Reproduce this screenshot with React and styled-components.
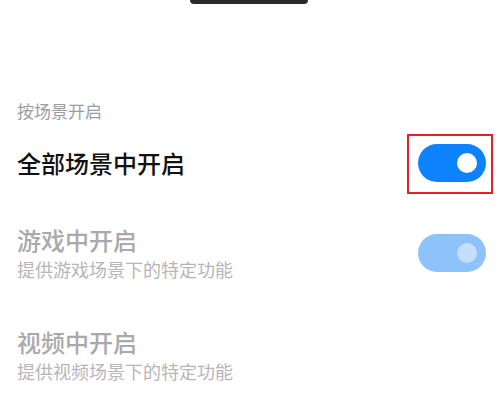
import React from "react";
import styled, { createGlobalStyle } from "styled-components";

const Global = createGlobalStyle`
  html, body { margin: 0; padding: 0; background: #ffffff; }
  body { font-family: "Noto Sans CJK SC", "Noto Sans", sans-serif; }
`;

const Page = styled.div`
  width: 500px;
  height: 409px;
  overflow: hidden;
  background: #ffffff;
  display: flex;
  flex-direction: column;
`;

const Handle = styled.div`
  align-self: center;
  width: 118px;
  height: 4px;
  background: #2a2a2a;
  border-radius: 0 0 5px 5px;
  margin-left: -2px;
`;

const SectionHeader = styled.div`
  margin-top: 95px;
  padding-left: 17px;
  font-size: 17px;
  line-height: 24px;
  color: #9c9ca4;
`;

const Row = styled.div`
  display: flex;
  align-items: center;
  justify-content: space-between;
  padding: ${(p) => p.$pad || "23px 14px 23px 17px"};
`;

const TextBlock = styled.div`
  display: flex;
  flex-direction: column;
`;

const Title = styled.div`
  font-size: 24px;
  line-height: 32px;
  font-weight: 500;
  color: ${(p) => (p.$disabled ? "#a9a9ab" : "#111111")};
`;

const Subtitle = styled.div`
  font-size: 18px;
  line-height: 26px;
  color: #b6b6b8;
`;

const ToggleWrap = styled.div`
  position: relative;
`;

const Highlight = styled.div`
  position: absolute;
  top: -10px;
  bottom: -12px;
  left: -11px;
  right: -7px;
  border: 2px solid #e5202b;
  pointer-events: none;
`;

const Toggle = styled.div`
  width: 68px;
  height: 38px;
  border-radius: 19px;
  background: ${(p) => (p.$disabled ? "#8dc2fb" : "#0c83fd")};
  display: flex;
  align-items: center;
  justify-content: flex-end;
  padding-right: 9px;
  box-sizing: border-box;
`;

const Knob = styled.div`
  width: 20px;
  height: 20px;
  border-radius: 50%;
  background: ${(p) => (p.$disabled ? "#c3dffd" : "#ffffff")};
`;

export default function App() {
  return (
    <>
      <Global />
      <Page>
        <Handle />
        <SectionHeader>按场景开启</SectionHeader>
        <Row $pad="21px 14px 19px 17px">
          <Title>全部场景中开启</Title>
          <ToggleWrap>
            <Toggle>
              <Knob />
            </Toggle>
            <Highlight />
          </ToggleWrap>
        </Row>
        <Row $pad="23px 14px 21px 17px">
          <TextBlock>
            <Title $disabled>游戏中开启</Title>
            <Subtitle>提供游戏场景下的特定功能</Subtitle>
          </TextBlock>
          <Toggle $disabled>
            <Knob $disabled />
          </Toggle>
        </Row>
        <Row>
          <TextBlock>
            <Title $disabled>视频中开启</Title>
            <Subtitle>提供视频场景下的特定功能</Subtitle>
          </TextBlock>
        </Row>
      </Page>
    </>
  );
}
